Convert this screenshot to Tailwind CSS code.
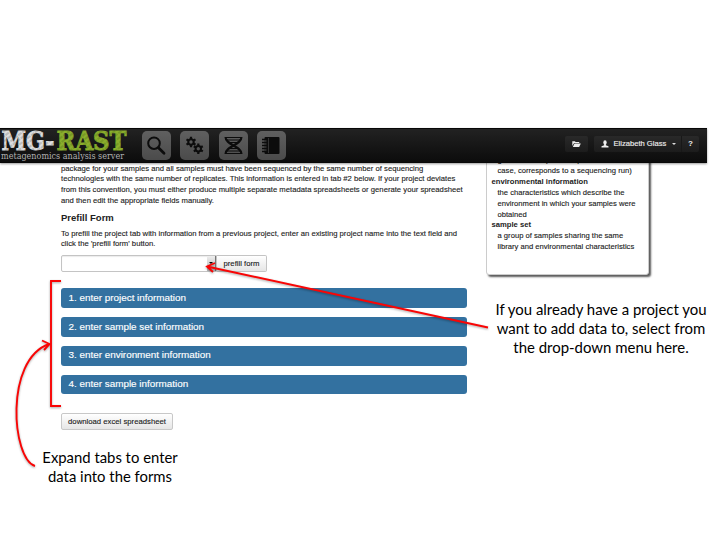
<!DOCTYPE html>
<html lang="en">
<head>
<meta charset="utf-8">
<title>MG-RAST metadata</title>
<script src="https://cdn.jsdelivr.net/npm/@tailwindcss/browser@4"></script>
</head>
<body class="bg-white">
<div class="relative w-[720px] h-[540px] overflow-hidden bg-white pt-32 font-['Liberation_Sans',Arial,sans-serif] text-[#222]">
  <header class="relative z-10 flex w-[707px] h-[35px] items-center bg-linear-to-b from-[#222] to-[#0c0c0c] border-y border-[#080808] shadow-[0_1px_2px_rgba(0,0,0,0.4)]">
    <svg class="w-[142px] h-[35px] shrink-0 overflow-visible" viewBox="0 0 142 35">
      <defs>
        <pattern id="chalk" width="5" height="4" patternUnits="userSpaceOnUse" patternTransform="rotate(-38)"><rect width="5" height="4" fill="#dedede"/><path d="M0 1h4" stroke="#888" stroke-width=".8"/></pattern>
        <pattern id="green" width="5" height="4" patternUnits="userSpaceOnUse" patternTransform="rotate(-38)"><rect width="5" height="4" fill="#8aae2c"/><path d="M0 1h4" stroke="#5c781c" stroke-width=".8"/></pattern>
      </defs>
      <g font-family="DejaVu Serif, serif" font-weight="bold" font-size="25.500" stroke-width=".9">
        <text x="1.500" y="22" textLength="53" lengthAdjust="spacingAndGlyphs" fill="url(#chalk)" stroke="url(#chalk)">MG-</text>
        <text x="56.500" y="22" textLength="70" lengthAdjust="spacingAndGlyphs" fill="url(#green)" stroke="url(#green)">RAST</text>
      </g>
      <text x="1" y="31" font-family="DejaVu Serif, serif" font-size="9.2" textLength="123" lengthAdjust="spacingAndGlyphs" fill="#b0b0b0">metagenomics analysis server</text>
    </svg>
    <nav class="flex gap-[9.3px]">
      <div class="flex size-[29px] items-center justify-center rounded-[5px] bg-linear-to-b from-[#606060] to-[#4b4b4b]">
        <svg class="size-[29px]" viewBox="0 0 29 29" fill="none" stroke="#0c0c0c"><circle cx="12" cy="12.2" r="5.800" stroke-width="2"/><path d="M16.5 16.8l5.500 5.400" stroke-width="2.8" stroke-linecap="round"/></svg>
      </div>
      <div class="flex size-[29px] items-center justify-center rounded-[5px] bg-linear-to-b from-[#606060] to-[#4b4b4b]">
        <svg class="size-[29px]" viewBox="0 0 29 29" fill="none" stroke="#0c0c0c"><g id="gear"><circle cx="11" cy="11" r="2.700" stroke-width="2"/><path d="M11 5.800V8M11 14v2.200M6.500 8.400l1.900 1.100M13.600 12.500l1.900 1.100M6.500 13.600l1.900-1.100M13.600 9.500l1.900-1.100" stroke-width="2.200"/></g><use href="#gear" x="7.300" y="6.800"/></svg>
      </div>
      <div class="flex size-[29px] items-center justify-center rounded-[5px] bg-linear-to-b from-[#606060] to-[#4b4b4b]">
        <svg class="size-[29px]" viewBox="0 0 29 29" fill="none" stroke="#0c0c0c"><path d="M6 6.500h17M6 22.500h17M8 9h13M8 20h13M11 11.500h7M11 17.500h7" stroke-width="1.100"/><path d="M6.500 6c0 8 16 9 16 17M22.500 6c0 8-16 9-16 17" stroke-width="2.100"/></svg>
      </div>
      <div class="flex size-[29px] items-center justify-center rounded-[5px] bg-linear-to-b from-[#606060] to-[#4b4b4b]">
        <svg class="size-[29px]" viewBox="0 0 29 29"><rect x="7.500" y="6" width="15" height="17" rx="1" fill="#0c0c0c"/><path d="M11.500 7v15" stroke="#444" stroke-width=".7"/><path d="M5 8.500h4.500M5 11.500h4.500M5 14.500h4.500M5 17.500h4.500M5 20.500h4.500" stroke="#0c0c0c" stroke-width="1.400"/><path d="M7.500 10h2M7.500 13h2M7.500 16h2M7.500 19h2" stroke="#555" stroke-width=".9"/></svg>
      </div>
    </nav>
    <div class="ml-auto mr-2 mb-[3px] flex h-4 gap-[6px] text-[8px] text-[#eee]">
      <div class="flex w-[23px] items-center justify-center rounded-xs bg-linear-to-b from-[#292929] to-[#1c1c1c]">
        <svg class="w-[9px] h-[8px]" viewBox="0 0 9 8" fill="#eee"><path d="M.3 6V1.200h2.600l.7.800h3.600v1.100H2.100z"/><path d="M2.500 3.600H8.800L7.200 7H.8z"/></svg>
      </div>
      <div class="flex w-[105px] items-center rounded-xs bg-linear-to-b from-[#292929] to-[#1c1c1c]">
        <svg class="ml-[7px] w-[8px] h-[8px] shrink-0" viewBox="0 0 8 8" fill="#eee"><ellipse cx="4" cy="2.400" rx="1.700" ry="2.200"/><path d="M3.100 4h1.800v1.300l2.600 1V7.500H.5V6.300l2.600-1z"/></svg>
        <span class="ml-[4.500px] w-[54px] shrink-0 whitespace-nowrap text-[7.600px] [-webkit-text-stroke:0.15px_#eee]">Elizabeth Glass</span>
        <span class="ml-[4px] border-x-[2px] border-t-2 border-x-transparent border-t-[#ddd]"></span>
        <span class="ml-auto flex h-full w-[18px] items-center justify-center border-l border-[#181818] font-bold">?</span>
      </div>
    </div>
  </header>

  <div class="flex">
    <main class="ml-[61px] w-[406px] pt-[0.500px]">
      <p class="h-[44px] whitespace-nowrap text-[7.700px] leading-[10.900px] [-webkit-text-stroke:0.12px_#222]">package for your samples and all samples must have been sequenced by the same number of sequencing<br>technologies with the same number of replicates. This information is entered in tab #2 below. If your project deviates<br>from this convention, you must either produce multiple separate metadata spreadsheets or generate your spreadsheet<br>and then edit the appropriate fields manually.</p>
      <h2 class="mt-[4px] text-[9.500px] leading-[11px] font-bold">Prefill Form</h2>
      <p class="mt-[6px] whitespace-nowrap text-[7.700px] leading-[10.900px] [-webkit-text-stroke:0.12px_#222]">To prefill the project tab with information from a previous project, enter an existing project name into the text field and<br>click the 'prefill form' button.</p>
      <div class="mt-[4.500px] flex h-[17px]">
        <div class="flex w-[156px] justify-end rounded-l-[2px] border border-[#c4c4c4] bg-white shadow-[inset_0_1px_1px_rgba(0,0,0,0.08)]">
          <span class="flex w-[9px] items-center justify-center border-r border-[#777] bg-linear-to-b from-[#eee] to-[#bbb]"><i class="border-x-2 border-t-2 border-x-transparent border-t-black"></i></span>
        </div>
        <button class="w-[50px] rounded-r-[2px] border border-l-0 border-[#c4c4c4] bg-linear-to-b from-white to-[#e6e6e6] text-[7.730px] whitespace-nowrap [-webkit-text-stroke:0.12px_#222]">prefill form</button>
      </div>
      <div class="mt-[16.600px] flex flex-col gap-[9.200px] text-[9.880px] text-white [-webkit-text-stroke:0.15px_white]">
        <div class="flex h-[19.600px] items-center rounded-[3px] bg-[#3371a0] pl-[7.500px]">1. enter project information</div>
        <div class="flex h-[19.600px] items-center rounded-[3px] bg-[#3371a0] pl-[7.500px]">2. enter sample set information</div>
        <div class="flex h-[19.600px] items-center rounded-[3px] bg-[#3371a0] pl-[7.500px]">3. enter environment information</div>
        <div class="flex h-[19.600px] items-center rounded-[3px] bg-[#3371a0] pl-[7.500px]">4. enter sample information</div>
      </div>
      <button class="mt-[19px] block h-[17px] w-[112px] rounded-[2px] border border-[#c8c8c8] bg-linear-to-b from-white to-[#e6e6e6] text-[7.730px] whitespace-nowrap [-webkit-text-stroke:0.12px_#222]">download excel spreadsheet</button>
    </main>
    <aside class="-mt-[6px] ml-[19px] h-[118px] w-[163px] rounded-b-[3px] border border-[#ccc] bg-white pl-[4.500px] shadow-[2px_2px_2px_rgba(0,0,0,0.65)]">
      <dl class="whitespace-nowrap text-[7.650px] leading-[10.900px]">
        <dd class="-mt-[3px] pl-[6px] [-webkit-text-stroke:0.12px_#222]">given dataset (for example, in this<br>case, corresponds to a sequencing run)</dd>
        <dt class="font-bold">environmental information</dt>
        <dd class="pl-[6px] [-webkit-text-stroke:0.12px_#222]">the characteristics which describe the<br>environment in which your samples were<br>obtained</dd>
        <dt class="font-bold">sample set</dt>
        <dd class="pl-[6px] [-webkit-text-stroke:0.12px_#222]">a group of samples sharing the same<br>library and environmental characteristics</dd>
      </dl>
    </aside>
  </div>

  <svg class="absolute inset-0 z-20 h-[540px] w-[720px] drop-shadow-[0_1px_1px_rgba(0,0,0,0.35)]" viewBox="0 0 720 540" fill="none" stroke="#f90505" stroke-width="1.900">
    <path d="M61 281H51V406H61"/>
    <path d="M35 466C12 459 4 360 49 344M42 340.500L49.500 344L44 350"/>
    <path d="M488 327.500L207 266.500M215 263L207 266.500L213 272"/>
  </svg>
  <p class="absolute top-[448px] left-[20px] z-20 w-[180px] text-center font-[Lato,sans-serif] text-[14.850px] leading-[19.200px] whitespace-nowrap text-black">Expand tabs to enter<br>data into the forms</p>
  <p class="absolute top-[300px] left-[491px] z-20 w-[220px] text-center font-[Lato,sans-serif] text-[14.950px] leading-[19.200px] whitespace-nowrap text-black">If you already have a project you<br>want to add data to, select from<br>the drop-down menu here.</p>
</div>
</body>
</html>
